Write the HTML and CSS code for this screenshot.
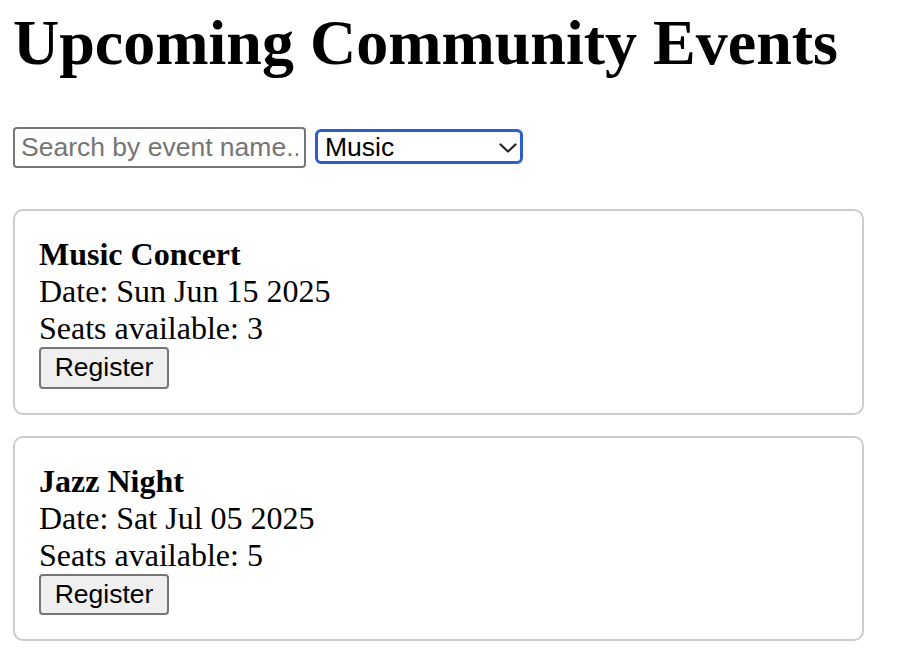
FILE: index.html
```html
<!DOCTYPE html>
<html lang="en">
<head>
<meta charset="utf-8">
<title>Upcoming Community Events</title>
<link rel="stylesheet" href="styles.css">
</head>
<body>
<h1 class="title">Upcoming Community Events</h1>
<div class="controls">
  <input class="search" type="text" placeholder="Search by event name...">
  <div class="select-wrap">
    <select class="category">
      <option>Music</option>
      <option>All</option>
      <option>Sports</option>
      <option>Art</option>
    </select>
    <svg class="chevron" width="18" height="10" viewBox="0 0 18 10"><path d="M1.5 1.5 L9 8.5 L16.5 1.5" fill="none" stroke="#222" stroke-width="2.2" stroke-linecap="round" stroke-linejoin="round"/></svg>
  </div>
</div>
<div class="events">
  <div class="card">
    <div class="card-title">Music Concert</div>
    <div class="card-line">Date: Sun Jun 15 2025</div>
    <div class="card-line">Seats available: 3</div>
    <button class="register">Register</button>
  </div>
  <div class="card">
    <div class="card-title">Jazz Night</div>
    <div class="card-line">Date: Sat Jul 05 2025</div>
    <div class="card-line">Seats available: 5</div>
    <button class="register">Register</button>
  </div>
</div>
</body>
</html>
```
FILE: styles.css
```css
html, body {
  background: #ffffff;
}
body {
  margin: 0;
  padding: 0 13px;
  font-family: "Liberation Serif", "Times New Roman", serif;
  font-size: 32px;
  color: #000;
}
.title {
  font-size: 64px;
  font-weight: bold;
  margin: 6px 0 0 0;
  line-height: normal;
}
.controls {
  display: flex;
  align-items: flex-start;
  gap: 9px;
  margin-top: 47px;
}
.search {
  box-sizing: border-box;
  width: 293px;
  height: 41px;
  border: 2px solid #767676;
  border-radius: 4px;
  padding: 0 6px;
  font-family: "Liberation Sans", Arial, sans-serif;
  font-size: 26.5px;
  color: #000;
  background: #fff;
  outline: none;
}
.search::placeholder {
  color: #757575;
}
.select-wrap {
  position: relative;
  margin-top: 1.6px;
}
.category {
  box-sizing: border-box;
  width: 208px;
  height: 35px;
  border: 3px solid #2c5fcd;
  border-radius: 6px;
  padding: 0 0 0 7px;
  font-family: "Liberation Sans", Arial, sans-serif;
  font-size: 26.5px;
  color: #000;
  background: #fff;
  -webkit-appearance: none;
  appearance: none;
  outline: none;
  display: block;
}
.chevron {
  position: absolute;
  left: 184px;
  top: 14px;
  pointer-events: none;
}
.events {
  display: flex;
  flex-direction: column;
  gap: 21px;
  margin-top: 41px;
}
.card {
  box-sizing: border-box;
  width: 851px;
  border: 2px solid #cccccc;
  border-radius: 10px;
  padding: 25px 24px 24px 24px;
  display: flex;
  flex-direction: column;
  align-items: flex-start;
}
.card-title {
  font-weight: bold;
}
.register {
  box-sizing: border-box;
  margin-top: 0;
  width: 130px;
  height: 41.5px;
  border: 2px solid #767676;
  border-radius: 4px;
  background: #efefef;
  font-family: "Liberation Sans", Arial, sans-serif;
  font-size: 26.5px;
  color: #000;
  padding: 0;
}
```
